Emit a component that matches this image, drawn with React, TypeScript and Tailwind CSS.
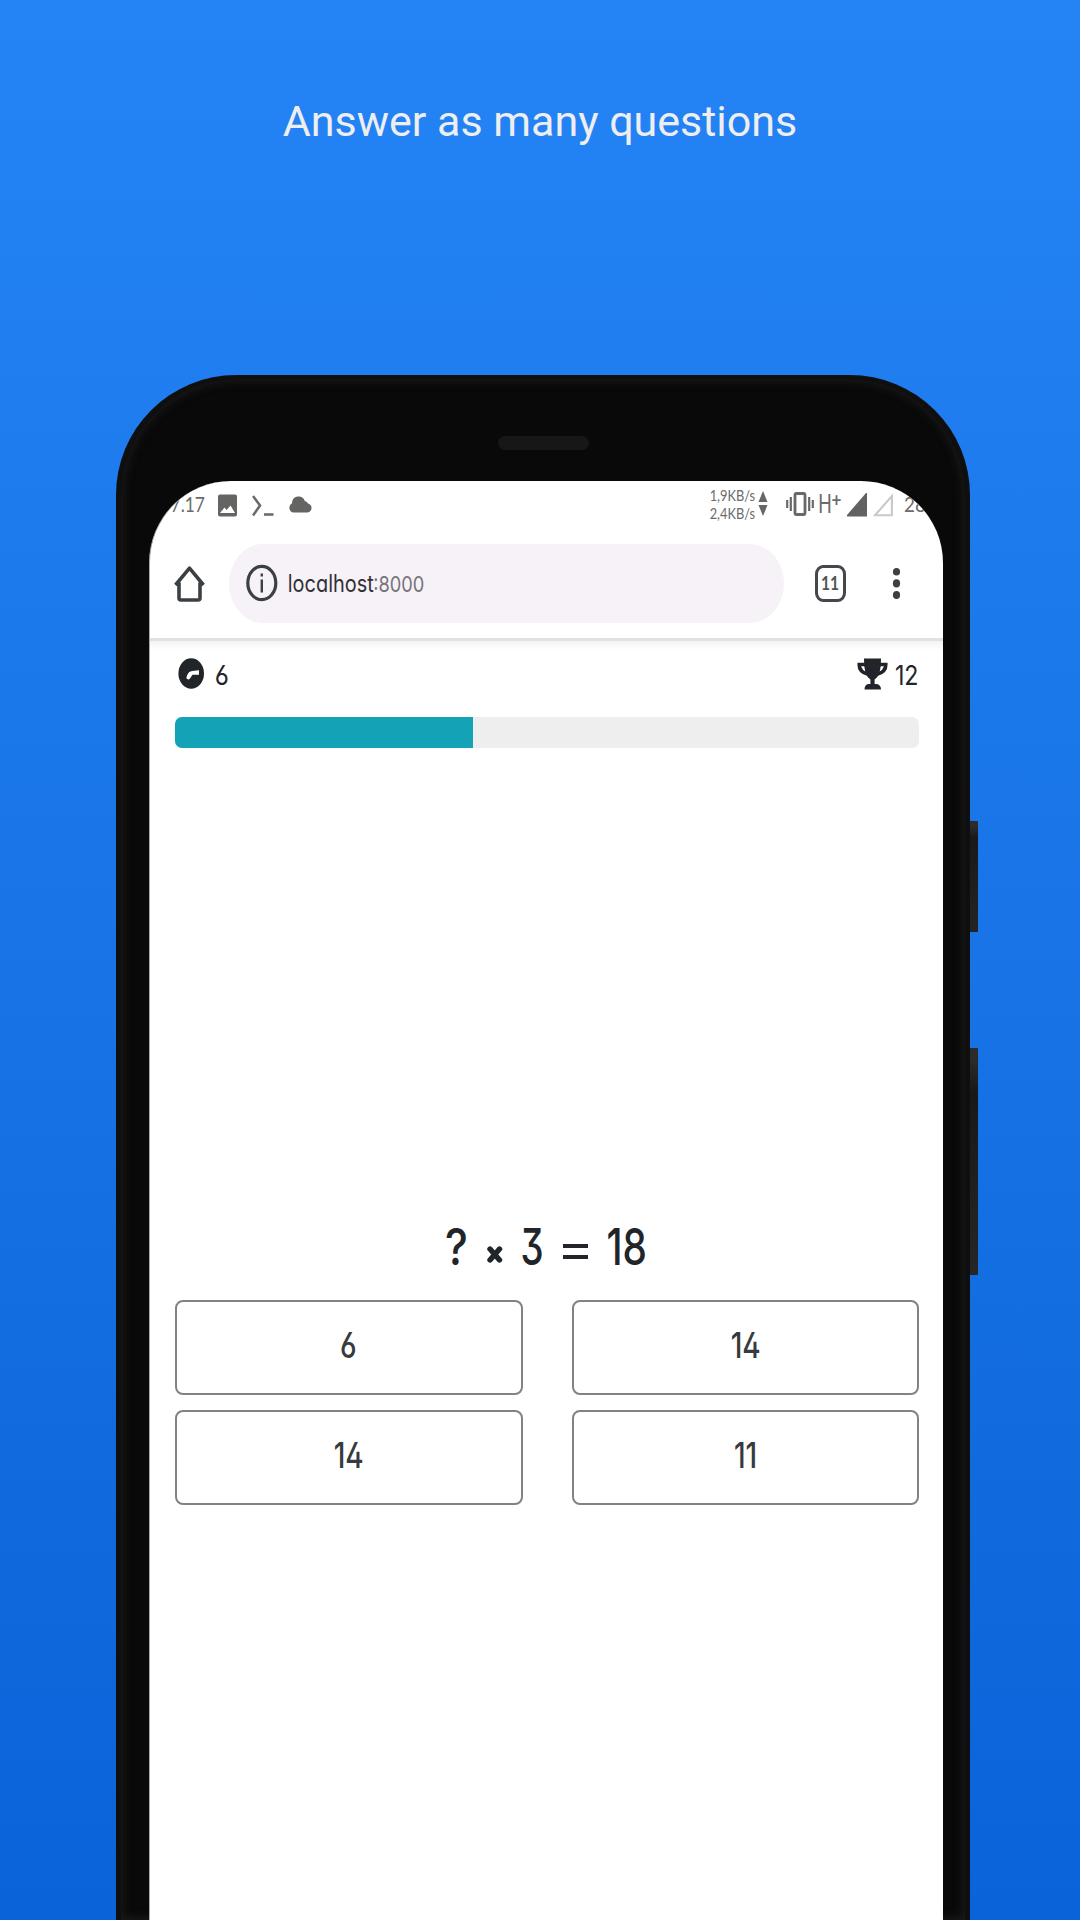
import React from "react";

const digitFont =
  "font-['Inter',sans-serif] [font-feature-settings:'cv03','cv02','cv09','cv11']";

function Squeezed({ box, text, children }: { box: string; text: string; children: React.ReactNode }) {
  return (
    <span className={"flex shrink-0 items-center justify-center whitespace-nowrap " + box}>
      <span className={"block shrink-0 " + text}>{children}</span>
    </span>
  );
}

function StatusBar() {
  return (
    <div className="flex h-[63px] shrink-0 items-start pl-[17px] font-['Lato',sans-serif] text-[#6b6b6b]">
      <Squeezed box="mt-[12px] h-[22px] w-[42px]" text="text-[22px] leading-[22px] scale-x-[0.79]">
        7.17
      </Squeezed>
      <svg className="ml-[8px] mt-[13px] h-[23px] w-[21px] shrink-0" viewBox="0 0 21 23">
        <rect x="1" y="0.5" width="19" height="22" rx="2" fill="#646562" />
        <path d="M3 19 L7.5 13.5 L9.5 16 L13.5 11.5 L18 19Z" fill="#fff" />
      </svg>
      <svg className="ml-[14px] mt-[13px] h-[24px] w-[22px] shrink-0" viewBox="0 0 22 24" fill="none" stroke="#6b6b6b">
        <path d="M1 2 L8 11.5 L1 21.5" strokeWidth="2.6" />
        <path d="M12 20.5H21.5" strokeWidth="2.6" />
      </svg>
      <svg className="ml-[14px] mt-[15px] h-[17px] w-[24px] shrink-0" viewBox="0 0 24 17" fill="#646562">
        <path d="M5 16.5A5 5 0 0 1 4 7.3A6.6 6.9 0 0 1 16.8 5A5 4 0 0 1 20 7.6A5 4.6 0 0 1 19.5 16.5Z" />
      </svg>
      <div className="ml-[397px] mt-[5px] flex flex-col">
        <Squeezed box="h-[18px] w-[47px]" text="text-[16px] leading-[18px] scale-x-[0.8]">1,9KB/s</Squeezed>
        <Squeezed box="h-[18px] w-[47px]" text="text-[16px] leading-[18px] scale-x-[0.8]">2,4KB/s</Squeezed>
      </div>
      <svg className="ml-[2px] mt-[10px] h-[26px] w-[10px] shrink-0" viewBox="0 0 10 26" fill="#666">
        <path d="M5 0L9.5 11H0.5ZM0.5 14H9.5L5 25Z" />
      </svg>
      <svg className="ml-[18px] mt-[11px] h-[24px] w-[28px] shrink-0" viewBox="0 0 28 24" fill="none" stroke="#696969">
        <rect x="9" y="1.5" width="10" height="21" rx="1.5" strokeWidth="2.8" />
        <path d="M1.2 8V16M4.8 5V19M23.2 5V19M26.8 8V16" strokeWidth="2.2" />
      </svg>
      <div className="ml-[5px] mt-[13px] flex items-start">
        <Squeezed box="h-[22px] w-[12px]" text="font-['Roboto',sans-serif] text-[25px] leading-[22px] scale-x-[0.76]">H</Squeezed>
        <Squeezed box="-mt-[3px] h-[18px] w-[11px]" text="text-[19px] font-bold leading-[18px] scale-x-90">+</Squeezed>
      </div>
      <svg className="ml-[5px] mt-[12px] h-[24px] w-[20px] shrink-0" viewBox="0 0 20 24">
        <path d="M0 23.5V22L19 0H20V23.5Z" fill="#626262" />
      </svg>
      <svg className="ml-[6px] mt-[12px] h-[24px] w-[20px] shrink-0" viewBox="0 0 20 24">
        <path d="M2 22.3L18.9 3V22.3Z" fill="none" stroke="#c9c9c9" strokeWidth="2.1" />
      </svg>
      <Squeezed box="ml-[12px] mt-[12px] h-[22px] w-[36px]" text="text-[21px] leading-[22px] scale-x-[0.9]">
        28%
      </Squeezed>
    </div>
  );
}

function Toolbar() {
  return (
    <div className="flex h-[97px] shrink-0 items-start border-b-[3px] border-[#e3e0e3] pl-[24px]">
      <svg className="mt-[21px] h-[38px] w-[31px] shrink-0" viewBox="0 0 31 38" fill="none" stroke="#3c4043" strokeWidth="3.6">
        <path d="M1.5 20L15.5 3.2L29.5 20M5 17.5V33Q5 35 7 35H24Q26 35 26 33V17.5" strokeLinejoin="round" />
      </svg>
      <div className="ml-[24px] flex h-[79px] w-[555px] shrink-0 items-start rounded-[34px/39.5px] bg-[#f6f2f7]">
        <svg className="ml-[16px] mt-[20px] h-[38px] w-[33px] shrink-0" viewBox="0 0 33 38" fill="none" stroke="#3c4043">
          <ellipse cx="16.8" cy="19" rx="14" ry="16.7" strokeWidth="3.2" />
          <path d="M16.8 15.5V28.5M16.8 9.5V12.5" strokeWidth="2.4" />
        </svg>
        <div className={"flex pt-[27px] pl-[10px] text-[24px] leading-[26px] text-[#303135] " + digitFont}>
          <Squeezed box="h-[26px] w-[85px]" text="scale-x-[0.83]">localhost</Squeezed>
          <Squeezed box="h-[26px] w-[52px] text-[#77747a]" text="text-[22px] scale-x-[0.83]">:8000</Squeezed>
        </div>
      </div>
      <div className="ml-[31px] mt-[21px] flex h-[37px] w-[31px] shrink-0 items-center justify-center rounded-[8px/9px] border-[3.5px] border-[#44474b] pb-[2px] font-['Lato',sans-serif] text-[19px] font-bold leading-none text-[#505357]">
        <span className="block scale-x-[0.82]">11</span>
      </div>
      <svg className="ml-[46px] mt-[24px] h-[34px] w-[9px] shrink-0" viewBox="0 0 9 34" fill="#3c4043">
        <ellipse cx="4.5" cy="3.8" rx="3.6" ry="3.8" />
        <ellipse cx="4.5" cy="15.4" rx="3.6" ry="4.1" />
        <ellipse cx="4.5" cy="27" rx="3.6" ry="4.1" />
      </svg>
    </div>
  );
}

function ScoreRow() {
  return (
    <div className={"flex h-[76px] shrink-0 items-start justify-between bg-linear-to-b from-[#f5f2f5] to-white to-[9px] pr-[24px] pl-[25px] text-[#212529] " + digitFont}>
      <div className="flex items-start">
        <svg className="ml-[3px] mt-[17px] h-[32px] w-[27px]" viewBox="0 0 27 32">
          <ellipse cx="13.2" cy="15.5" rx="12.8" ry="15.2" fill="#212529" />
          <path d="M21 12.3V16.8H14.5L12 20.5Q10 22.5 8.3 20Q8.2 17.5 11.2 14L14 12.9Z" fill="#fff" />
        </svg>
        <Squeezed box="ml-[8px] mt-[21px] h-[28px] w-[18px]" text="text-[27px] leading-[28px] scale-x-[0.9]">6</Squeezed>
      </div>
      <div className="flex items-start">
        <svg className="mt-[17px] h-[32px] w-[31px]" viewBox="0 0 31 32">
          <path d="M2.2 6.5H28.8Q29 14 19.5 16.5H11.5Q2 14 2.2 6.5Z" fill="none" stroke="#212529" strokeWidth="3.6" />
          <path d="M7 0.5H24Q24.5 17 17.6 21.5V26H20Q24 27 24 31.5H7.5Q7.5 27 11 26H13.4V21.5Q6.5 17 7 0.5Z" fill="#212529" />
        </svg>
        <Squeezed box="ml-[7px] mt-[21px] h-[28px] w-[24px]" text="text-[27px] leading-[28px] scale-x-[0.86]">12</Squeezed>
      </div>
    </div>
  );
}

function Equation() {
  return (
    <div className={"mt-[476px] flex h-[46px] shrink-0 items-center pl-[295px] font-medium text-[51px] leading-[46px] text-[#212529] " + digitFont}>
      <Squeezed box="h-[46px] w-[23px]" text="scale-x-[0.85]">?</Squeezed>
      <svg className="ml-[18px] mt-[15px] h-[19px] w-[17px] shrink-0" viewBox="0 0 17 19" stroke="#212529" strokeWidth="5.4" strokeLinecap="round">
        <path d="M4 4L13.5 15M13.5 4L4 15" />
      </svg>
      <Squeezed box="ml-[18px] h-[46px] w-[23px]" text="scale-x-[0.72]">3</Squeezed>
      <div className="ml-[19px] mt-[9px] flex w-[25px] shrink-0 flex-col gap-[7px]">
        <div className="h-[4px] bg-[#212529]" />
        <div className="h-[4px] bg-[#212529]" />
      </div>
      <Squeezed box="ml-[20px] h-[46px] w-[38px]" text="scale-x-[0.76]">18</Squeezed>
    </div>
  );
}

function Answer({ value }: { value: string }) {
  return (
    <button className={"flex h-[95px] items-start justify-center rounded-[8px] border-2 border-[#808284] bg-white pt-[25px] text-[35px] font-medium leading-[36px] text-[#373a3e] " + digitFont}>
      <span className="block scale-x-[0.8]">{value}</span>
    </button>
  );
}

export default function App() {
  return (
    <div className="flex h-[1920px] w-[1080px] flex-col overflow-hidden bg-linear-to-b from-[#2484f6] to-[#0a63d8]">
      <h1 className="mt-[97px] h-[278px] shrink-0 text-center font-['Roboto',sans-serif] text-[43px] font-normal leading-[49px] text-[#eeeeee]">
        Answer as many questions
      </h1>
      <div className="flex flex-1 items-stretch pl-[116px]">
        <div className="flex w-[854px] shrink-0 flex-col rounded-t-[120px] border-x-[5px] border-t-[4px] border-[#0f0f0f] bg-[#090909] shadow-[inset_0_0_10px_2px_#1b1b1b]">
          <div className="flex h-[102px] shrink-0 justify-center pt-[57px]">
            <div className="ml-[1px] h-[14px] w-[91px] rounded-[7px] bg-[#171717]" />
          </div>
          <div className="ml-[28px] flex w-[794px] flex-1 flex-col overflow-hidden rounded-t-[82px] border-l border-[#aaaaaa] bg-white">
            <StatusBar />
            <Toolbar />
            <ScoreRow />
            <div className="mr-[24px] ml-[25px] h-[31px] shrink-0 overflow-hidden rounded-[7px] bg-[#eeeeee]">
              <div className="h-full w-[40%] bg-[#13a2b6]" />
            </div>
            <Equation />
            <div className="mt-[30px] grid grid-cols-2 gap-x-[49px] gap-y-[15px] pr-[24px] pl-[25px]">
              {["6", "14", "14", "11"].map((value, i) => (
                <Answer key={i} value={value} />
              ))}
            </div>
          </div>
        </div>
        <div className="flex flex-col pt-[446px]">
          <div className="h-[111px] w-[8px] rounded-r-[1px] bg-linear-to-b from-[#2b2b2b] from-5% via-[#191919] via-15% to-[#242424]" />
          <div className="mt-[116px] h-[227px] w-[8px] rounded-r-[1px] bg-linear-to-b from-[#2b2b2b] from-5% via-[#181818] via-20% to-[#262626]" />
        </div>
      </div>
    </div>
  );
}
